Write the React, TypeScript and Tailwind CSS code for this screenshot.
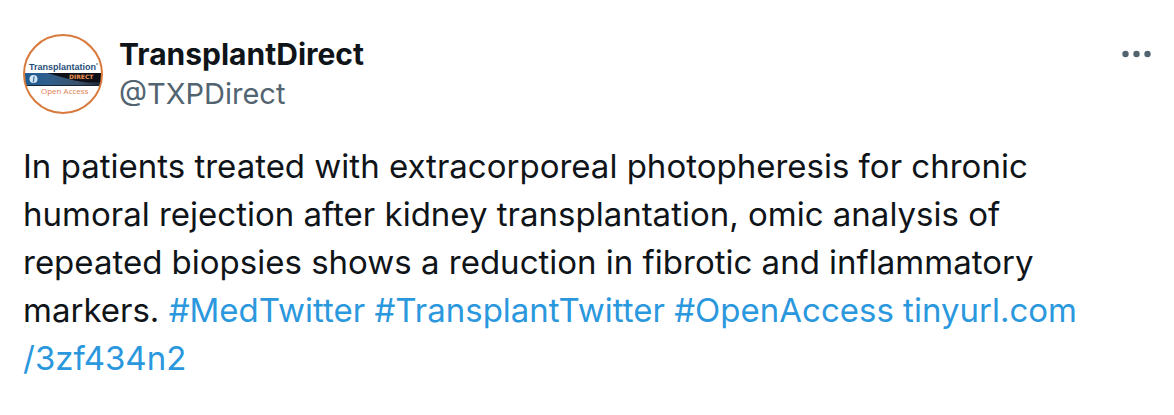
import React from 'react'

interface Tag {
    label: string;
    href: string;
}

const tags: Tag[] = [
    { label: '#MedTwitter', href: '#MedTwitter' },
    { label: '#TransplantTwitter', href: '#TransplantTwitter' },
    { label: '#OpenAccess', href: '#OpenAccess' },
];

const Avatar = () => {
    return (
        <svg viewBox="0 0 80 80" className="size-20 shrink-0" role="img" aria-label="TransplantDirect">
            <defs>
                <linearGradient id="band" x1="0" x2="1" y1="0" y2="0">
                    <stop offset="0" stopColor="#1d5c94" />
                    <stop offset="0.3" stopColor="#2f5f8c" />
                    <stop offset="0.7" stopColor="#3b526a" />
                    <stop offset="1" stopColor="#1c2733" />
                </linearGradient>
            </defs>
            <circle cx="40" cy="40" r="39" fill="#fff" />
            <text x="6" y="36" fontSize="9" fontWeight="700" fill="#1f4e79" fontFamily="'Liberation Sans', sans-serif">
                Transplantation
            </text>
            <circle cx="74" cy="30" r="0.800" fill="#1f4e79" />
            <rect x="2" y="39" width="76" height="13" fill="url(#band)" />
            <path d="M24 39H78V48C66 49 56 48 46 45C38 43 32 41 24 39Z" fill="#0d1117" />
            <path d="M2 51.500H78" stroke="#152434" />
            <circle cx="10.500" cy="45" r="4" fill="#d5e6f4" />
            <path d="M11.500 42.500C9.500 44 12 46 10 48" fill="none" stroke="#2f6ea6" strokeWidth="1.200" />
            <text x="46" y="45" fontSize="6" fontWeight="700" fill="#f09050" fontFamily="'DejaVu Sans', sans-serif">DIRECT</text>
            <text x="18" y="60" fontSize="8" fill="#df8152" fontFamily="'Open Sans', sans-serif">Open Access</text>
            <circle cx="40" cy="40" r="39" fill="none" stroke="#d97a3c" strokeWidth="2" />
        </svg>
    )
}

const App = () => {
    return (
        <article className="bg-white px-[23px] py-[34px] font-['Inter',sans-serif] text-[#0f1419]">
            <header className="flex items-start gap-4">
                <Avatar />
                <div className="flex-1">
                    <h1 className="text-[30px] leading-10 font-bold">TransplantDirect</h1>
                    <p className="text-[29px] leading-10 text-[#536471]">@TXPDirect</p>
                </div>
                <button type="button" aria-label="More" className="mt-3.5 text-[#536471]">
                    <svg viewBox="0 0 30 12" width="30" height="12" fill="currentColor">
                        <circle cx="4.500" cy="6" r="3.200" />
                        <circle cx="15.500" cy="6" r="3.200" />
                        <circle cx="26.500" cy="6" r="3.200" />
                    </svg>
                </button>
            </header>
            <p className="mt-7 pr-8 text-[33px] leading-12">
                In patients treated with extracorporeal photopheresis for chronic humoral rejection after
                kidney transplantation, omic analysis of repeated biopsies shows a reduction in fibrotic
                and inflammatory markers.{' '}
                {tags.map((tag) => (
                    <React.Fragment key={tag.label}>
                        <a href={tag.href} className="text-[#2b98de]">{tag.label}</a>{' '}
                    </React.Fragment>
                ))}
                <a href="#article" className="text-[#2b98de]">tinyurl.com<wbr />/3zf434n2</a>
            </p>
        </article>
    )
}

export default App
